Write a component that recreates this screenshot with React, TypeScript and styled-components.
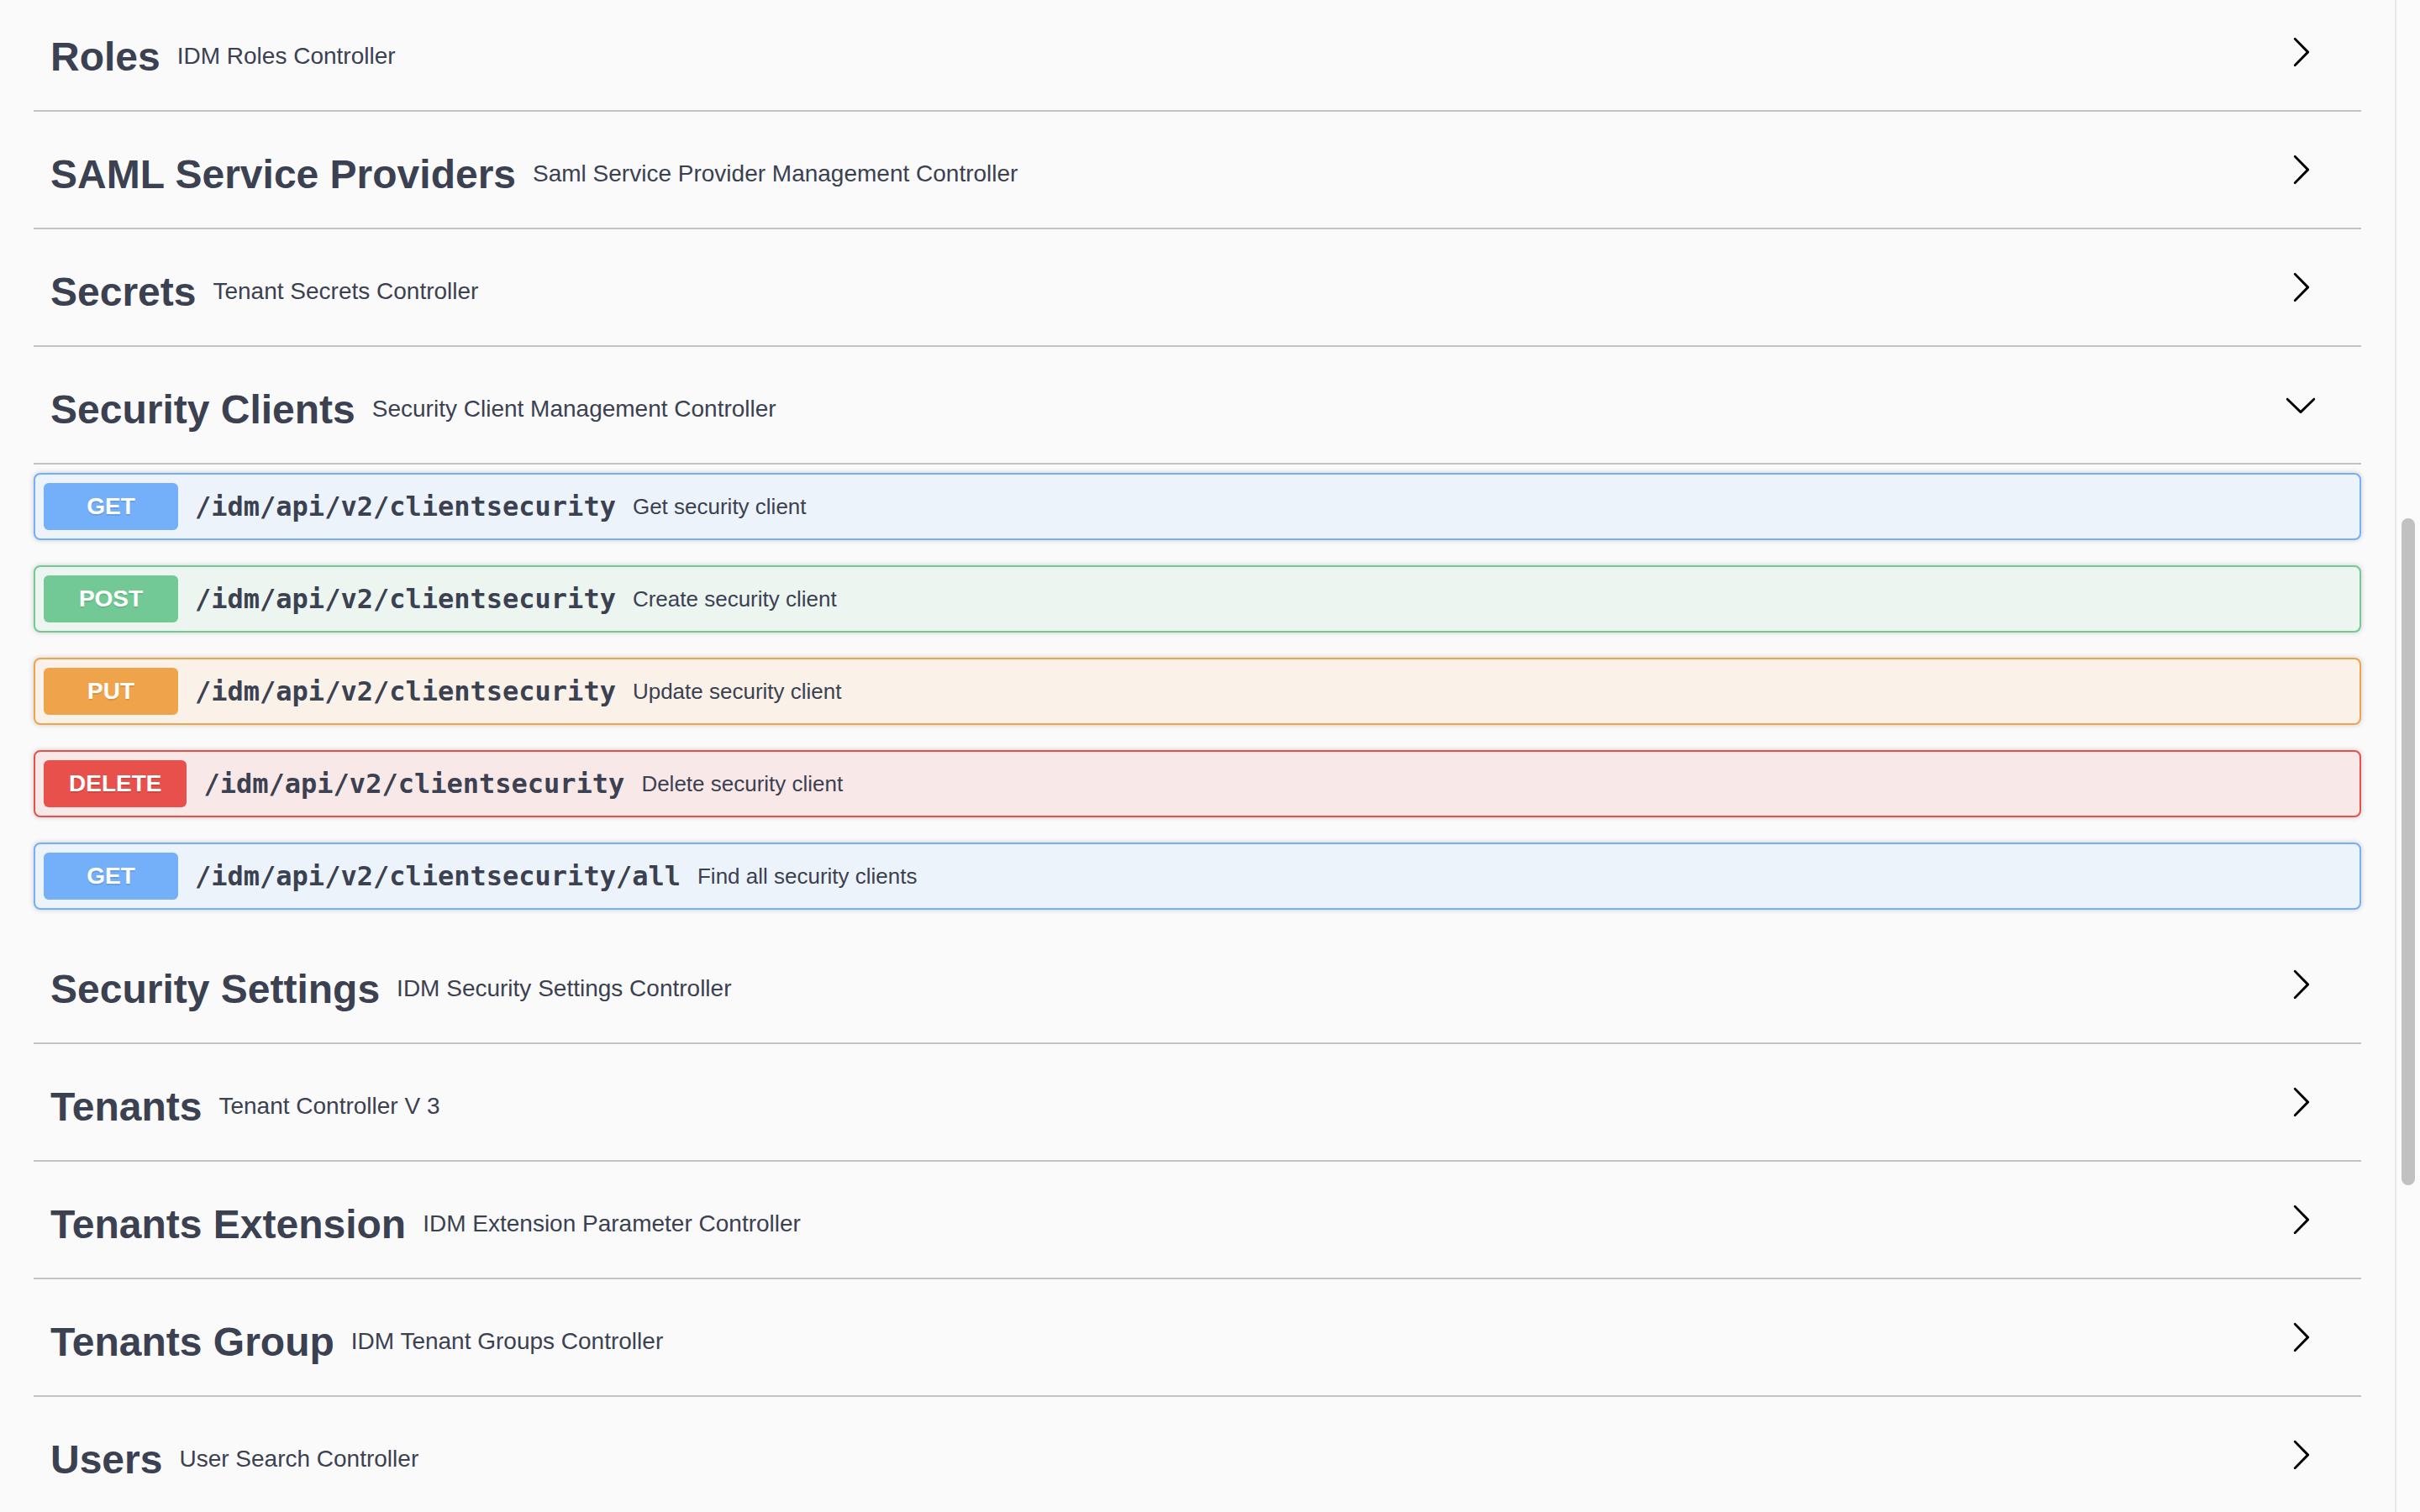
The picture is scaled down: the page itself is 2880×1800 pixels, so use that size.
import React from "react";
import styled, { createGlobalStyle } from "styled-components";

const GlobalStyle = createGlobalStyle`
  html, body {
    margin: 0;
    padding: 0;
    background: #fafafa;
    overflow: hidden;
  }
  * { box-sizing: border-box; }
`;

type Method = "get" | "post" | "put" | "delete";

const methodColors: Record<Method, { main: string; bg: string }> = {
  get: { main: "#74aff9", bg: "#edf3fb" },
  post: { main: "#72c995", bg: "#edf5f0" },
  put: { main: "#efa34a", bg: "#faf1e8" },
  delete: { main: "#e7504b", bg: "#f9e8e8" },
};

const Page = styled.div`
  display: flex;
  width: 2880px;
  height: 1800px;
  overflow: hidden;
  background: #fafafa;
  font-family: "Liberation Sans", Arial, Helvetica, sans-serif;
  color: #3b4151;
`;

const Main = styled.main`
  flex: 1;
  padding: 3px 40px 0 40px;
  min-width: 0;
`;

const Section = styled.section`
  display: flex;
  flex-direction: column;
`;

const TagHeader = styled.h3`
  display: flex;
  align-items: center;
  height: 130px;
  margin: 0 0 10px 0;
  padding: 0 52px 0 20px;
  border-bottom: 2px solid rgba(59, 65, 81, 0.3);
  font-family: "Liberation Sans", Arial, Helvetica, sans-serif;
  font-size: 48px;
  font-weight: 700;
  color: #3b4151;
  cursor: pointer;
`;

const TagName = styled.span`
  white-space: nowrap;
`;

const TagDesc = styled.small`
  flex: 1;
  padding: 0 20px;
  font-size: 28px;
  font-weight: 400;
  font-family: "Liberation Sans", Arial, Helvetica, sans-serif;
`;

const Expand = styled.button`
  border: none;
  background: none;
  padding: 0;
  margin: 0 0 11px 0;
  width: 40px;
  height: 40px;
  display: flex;
  align-items: center;
  justify-content: center;
  cursor: pointer;
`;

const Ops = styled.div`
  display: flex;
  flex-direction: column;
`;

const OpBlock = styled.div<{ $method: Method }>`
  display: flex;
  align-items: center;
  margin: 0 0 30px 0;
  padding: 10px;
  border: 2px solid ${(p) => methodColors[p.$method].main};
  border-radius: 8px;
  background: ${(p) => methodColors[p.$method].bg};
  box-shadow: 0 0 6px rgba(0, 0, 0, 0.19);
`;

const MethodBadge = styled.span<{ $method: Method }>`
  display: inline-block;
  min-width: 160px;
  padding: 12px 30px;
  border-radius: 6px;
  background: ${(p) => methodColors[p.$method].main};
  color: #fff;
  font-family: "Liberation Sans", Arial, Helvetica, sans-serif;
  font-size: 28px;
  line-height: 32px;
  font-weight: 700;
  text-align: center;
  text-shadow: 0 2px 0 rgba(0, 0, 0, 0.1);
`;

const PathWrap = styled.div`
  display: flex;
  align-items: center;
  gap: 0 20px;
  padding: 0 20px;
`;

const OpPath = styled.span`
  font-family: "DejaVu Sans Mono", "Liberation Mono", monospace;
  font-size: 32px;
  font-weight: 700;
  color: #3b4151;
`;

const OpDesc = styled.span`
  font-family: "Liberation Sans", Arial, Helvetica, sans-serif;
  font-size: 26px;
  color: #3b4151;
`;

const Track = styled.div`
  width: 30px;
  height: 100%;
  flex-shrink: 0;
  background: #fbfbfb;
  border-left: 2px solid #e8e8e8;
  padding: 0 6px;
`;

const Thumb = styled.div`
  width: 16px;
  height: 794px;
  margin-top: 617px;
  border-radius: 8px;
  background: #c1c1c1;
`;

const ArrowRight = () => (
  <svg width="40" height="40" viewBox="0 0 20 20" aria-hidden="true">
    <path
      fill="#000"
      d="M13.25 10L6.109 2.58a.697.697 0 0 1 0-.979.68.68 0 0 1 .969 0l7.83 7.908a.697.697 0 0 1 0 .979l-7.83 7.909a.68.68 0 0 1-.969 0 .697.697 0 0 1 0-.979L13.25 10z"
    />
  </svg>
);

const ArrowDown = () => (
  <svg width="40" height="40" viewBox="0 0 20 20" aria-hidden="true">
    <path
      fill="#000"
      d="M17.418 6.109c.272-.268.709-.268.979 0s.271.701 0 .969l-7.908 7.83c-.27.268-.707.268-.979 0l-7.908-7.83c-.27-.268-.27-.701 0-.969.271-.268.709-.268.979 0L10 13.25l7.418-7.141z"
    />
  </svg>
);

type Op = { method: Method; path: string; desc: string };
type Tag = { name: string; desc: string; open?: boolean; ops?: Op[] };

const tags: Tag[] = [
  { name: "Roles", desc: "IDM Roles Controller" },
  { name: "SAML Service Providers", desc: "Saml Service Provider Management Controller" },
  { name: "Secrets", desc: "Tenant Secrets Controller" },
  {
    name: "Security Clients",
    desc: "Security Client Management Controller",
    open: true,
    ops: [
      { method: "get", path: "/idm/api/v2/clientsecurity", desc: "Get security client" },
      { method: "post", path: "/idm/api/v2/clientsecurity", desc: "Create security client" },
      { method: "put", path: "/idm/api/v2/clientsecurity", desc: "Update security client" },
      { method: "delete", path: "/idm/api/v2/clientsecurity", desc: "Delete security client" },
      { method: "get", path: "/idm/api/v2/clientsecurity/all", desc: "Find all security clients" },
    ],
  },
  { name: "Security Settings", desc: "IDM Security Settings Controller" },
  { name: "Tenants", desc: "Tenant Controller V 3" },
  { name: "Tenants Extension", desc: "IDM Extension Parameter Controller" },
  { name: "Tenants Group", desc: "IDM Tenant Groups Controller" },
  { name: "Users", desc: "User Search Controller" },
];

export default function App() {
  return (
    <>
      <GlobalStyle />
      <Page>
        <Main>
          {tags.map((t) => (
            <Section key={t.name}>
              <TagHeader>
                <TagName>{t.name}</TagName>
                <TagDesc>{t.desc}</TagDesc>
                <Expand aria-label={t.open ? "collapse" : "expand"}>
                  {t.open ? <ArrowDown /> : <ArrowRight />}
                </Expand>
              </TagHeader>
              {t.open && t.ops && (
                <Ops>
                  {t.ops.map((o, i) => (
                    <OpBlock key={i} $method={o.method}>
                      <MethodBadge $method={o.method}>{o.method.toUpperCase()}</MethodBadge>
                      <PathWrap>
                        <OpPath>{o.path}</OpPath>
                        <OpDesc>{o.desc}</OpDesc>
                      </PathWrap>
                    </OpBlock>
                  ))}
                </Ops>
              )}
            </Section>
          ))}
        </Main>
        <Track>
          <Thumb />
        </Track>
      </Page>
    </>
  );
}
